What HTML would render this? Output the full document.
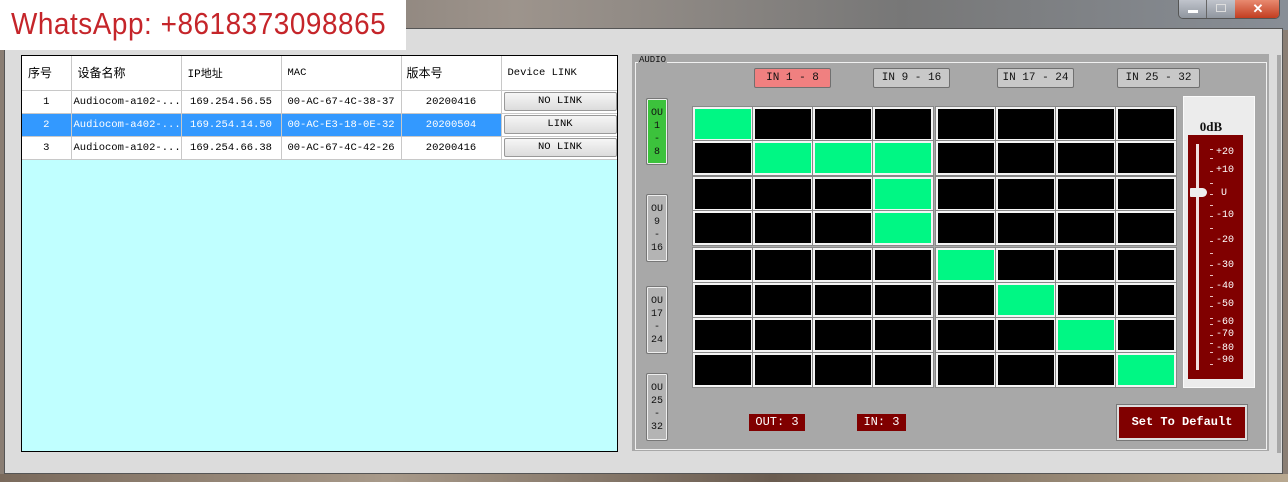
<!DOCTYPE html>
<html><head><meta charset="utf-8"><style>
*{margin:0;padding:0;box-sizing:border-box}
body{width:1288px;height:482px;overflow:hidden;position:relative;background:#8a7e74;font-family:"Liberation Mono","Noto Sans CJK SC",monospace}
.a{position:absolute}
.cell{position:absolute;width:60px;background:#000;border:2px solid #f4f4f4;box-shadow:0 0 0 1px #888}
.g{background:#00f784}
.tb{position:absolute;border:1px solid #707070;border-radius:2px;background:#c8c8c8;font-size:11px;text-align:center;line-height:18px;color:#111}
.ou{position:absolute;left:646px;width:22px;border:1px solid #777;border-radius:2px;background:#b4b4b4;box-shadow:inset 0 0 0 1px #eee;font-size:10px;text-align:center;line-height:13px;color:#111;padding-top:8px}
td{border-right:1px solid #c8c8c8;border-bottom:1px solid #c8c8c8;font-size:10.5px;white-space:nowrap;overflow:hidden}
.lbl{position:absolute;color:#fff;font-size:10px;left:1216px}
.tk{position:absolute;left:1210px;width:3px;height:1px;background:#e8c0c0}
</style></head><body>
<div class="a" style="left:0;top:0;width:1288px;height:30px;background:linear-gradient(90deg,#6d625b,#9d948c 40%,#777 70%,#888e96)"></div>
<div class="a" style="left:4px;top:28px;width:1279px;height:446px;background:#dcdcdc;border:1px solid #555"></div>
<div class="a" style="left:1178px;top:0;width:102px;height:19px;border:1px solid #555;border-top:none;border-radius:0 0 5px 5px;background:#9aa0ab;overflow:hidden">
<div class="a" style="left:0;top:0;width:28px;height:19px;border-right:1px solid #666;background:linear-gradient(#c0c4cc,#8d939c)"><div class="a" style="left:9px;top:10px;width:10px;height:3px;background:#fff"></div></div>
<div class="a" style="left:28px;top:0;width:28px;height:19px;background:linear-gradient(#c0c4cc,#8d939c)"><div class="a" style="left:9px;top:4px;width:10px;height:8px;border:1px solid #ddd"></div></div>
<div class="a" style="left:56px;top:0;width:46px;height:19px;background:linear-gradient(#e88a70,#c0391c);color:#fff;font:bold 13px 'Liberation Sans',sans-serif;text-align:center;line-height:18px">✕</div>
</div>
<div class="a" style="left:0;top:0;width:406px;height:50px;background:#fff"></div>
<div class="a" style="left:11px;top:2px;color:#c5252a;font:31px 'Liberation Sans',sans-serif;line-height:44px;white-space:nowrap;transform:scaleX(0.9);transform-origin:0 0;letter-spacing:0.6px">WhatsApp: +8618373098865</div>
<div class="a" style="left:21px;top:55px;width:597px;height:397px;background:#c0ffff;border:1px solid #000;overflow:hidden">
<table style="border-collapse:collapse;width:595px;table-layout:fixed">
<colgroup><col style="width:49px"><col style="width:110px"><col style="width:100px"><col style="width:120px"><col style="width:100px"><col style="width:116px"></colgroup>
<tr style="height:34px;background:#fff"><td style="padding-left:6px;font-size:12px">序号</td><td style="padding-left:6px;font-size:12px">设备名称</td><td style="padding-left:6px;font-size:11px">IP地址</td><td style="padding-left:6px">MAC</td><td style="padding-left:5px;font-size:12px">版本号</td><td style="padding-left:6px">Device LINK</td></tr>
<tr style="height:23px;background:#fff"><td style="text-align:center">1</td><td style="padding-left:2px">Audiocom-a102-...</td><td style="text-align:center">169.254.56.55</td><td style="text-align:center">00-AC-67-4C-38-37</td><td style="text-align:center">20200416</td><td><div style="margin-left:2px;height:19px;border:1px solid #999;border-radius:2px;background:linear-gradient(#f6f6f6,#dcdcdc);text-align:center;line-height:17px">NO LINK</div></td></tr>
<tr style="height:23px;background:#3399ff;color:#fff"><td style="text-align:center">2</td><td style="padding-left:2px">Audiocom-a402-...</td><td style="text-align:center">169.254.14.50</td><td style="text-align:center">00-AC-E3-18-0E-32</td><td style="text-align:center">20200504</td><td style="background:#fff;color:#000"><div style="margin-left:2px;height:19px;border:1px solid #999;border-radius:2px;background:linear-gradient(#f6f6f6,#dcdcdc);text-align:center;line-height:17px">LINK</div></td></tr>
<tr style="height:23px;background:#fff"><td style="text-align:center">3</td><td style="padding-left:2px">Audiocom-a102-...</td><td style="text-align:center">169.254.66.38</td><td style="text-align:center">00-AC-67-4C-42-26</td><td style="text-align:center">20200416</td><td><div style="margin-left:2px;height:19px;border:1px solid #999;border-radius:2px;background:linear-gradient(#f6f6f6,#dcdcdc);text-align:center;line-height:17px">NO LINK</div></td></tr>
</table></div>
<div class="a" style="left:1277px;top:55px;width:4px;height:398px;background:#a8a8a8"></div>
<div class="a" style="left:632px;top:54px;width:637px;height:397px;background:#a8a8a8"></div>
<div class="a" style="left:635px;top:62px;width:632px;height:388px;border:1px solid #f0f0f0"></div>
<div class="a" style="left:638px;top:55px;background:#a8a8a8;font-size:9px;color:#111;padding:0 1px">AUDIO</div>
<div class="tb" style="left:754px;top:68px;width:77px;height:20px;background:#f08080">IN 1 - 8</div>
<div class="tb" style="left:873px;top:68px;width:77px;height:20px">IN 9 - 16</div>
<div class="tb" style="left:997px;top:68px;width:77px;height:20px">IN 17 - 24</div>
<div class="tb" style="left:1117px;top:68px;width:83px;height:20px">IN 25 - 32</div>
<div class="ou" style="top:98px;height:67px;background:#3cc23c">OU<br>1<br>-<br>8</div>
<div class="ou" style="top:194px;height:68px">OU<br>9<br>-<br>16</div>
<div class="ou" style="top:286px;height:68px">OU<br>17<br>-<br>24</div>
<div class="ou" style="top:373px;height:68px">OU<br>25<br>-<br>32</div>
<div id="grid"></div>
<script>
var xs=[693,753,813,873,936,996,1056,1116],ys=[107,141,177,211,248,283,318,353],h=[34,34,34,34,34,34,34,34];
var gr={"0,0":1,"1,1":1,"1,2":1,"1,3":1,"2,3":1,"3,3":1,"4,4":1,"5,5":1,"6,6":1,"7,7":1};
var s="";for(var r=0;r<8;r++)for(var c=0;c<8;c++){s+='<div class="cell'+(gr[r+","+c]?" g":"")+'" style="left:'+xs[c]+'px;top:'+ys[r]+'px;height:'+h[r]+'px"></div>';}
document.getElementById("grid").outerHTML=s;
</script>
<div class="a" style="left:1183px;top:96px;width:72px;height:292px;background:#ececec;border:1px solid #fafafa"></div>
<div class="a" style="left:1188px;top:135px;width:55px;height:244px;background:#800000"></div>
<div class="a" style="left:1197px;top:119px;width:28px;background:#ececec;font:bold 13px 'Liberation Serif',serif;text-align:center;color:#111">0dB</div>
<div class="a" style="left:1196px;top:144px;width:3px;height:226px;background:#f0e0e0"></div>
<div class="a" style="left:1190px;top:188px;width:17px;height:9px;background:#eee;border-radius:1px 5px 5px 1px"></div>
<div class="lbl" style="top:147px">+20</div><div class="lbl" style="top:165px">+10</div><div class="lbl" style="top:188px;left:1221px">U</div><div class="lbl" style="top:210px">-10</div><div class="lbl" style="top:235px">-20</div><div class="lbl" style="top:260px">-30</div><div class="lbl" style="top:281px">-40</div><div class="lbl" style="top:299px">-50</div><div class="lbl" style="top:317px">-60</div><div class="lbl" style="top:329px">-70</div><div class="lbl" style="top:343px">-80</div><div class="lbl" style="top:355px">-90</div>
<div class="tk" style="top:149px"></div><div class="tk" style="top:158px"></div><div class="tk" style="top:171px"></div><div class="tk" style="top:183px"></div><div class="tk" style="top:194px"></div><div class="tk" style="top:205px"></div><div class="tk" style="top:216px"></div><div class="tk" style="top:228px"></div><div class="tk" style="top:241px"></div><div class="tk" style="top:253px"></div><div class="tk" style="top:265px"></div><div class="tk" style="top:275px"></div><div class="tk" style="top:287px"></div><div class="tk" style="top:296px"></div><div class="tk" style="top:306px"></div><div class="tk" style="top:318px"></div><div class="tk" style="top:324px"></div><div class="tk" style="top:335px"></div><div class="tk" style="top:343px"></div><div class="tk" style="top:352px"></div><div class="tk" style="top:364px"></div>
<div class="a" style="left:749px;top:414px;width:56px;height:17px;background:#800000;color:#fff;font-size:12px;line-height:17px;text-align:center">OUT: 3</div>
<div class="a" style="left:857px;top:414px;width:49px;height:17px;background:#800000;color:#fff;font-size:12px;line-height:17px;text-align:center">IN: 3</div>
<div class="a" style="left:1117px;top:405px;width:130px;height:35px;background:#800000;border:2px solid #ddd;box-shadow:0 0 0 1px #777;color:#fff;font:bold 12px 'Liberation Mono',monospace;line-height:31px;text-align:center">Set To Default</div>
<div class="a" style="left:0;top:474px;width:1288px;height:8px;background:linear-gradient(90deg,#7a6a5c,#a89a8a 30%,#6a5c50 60%,#b8a890)"></div>
</body></html>
